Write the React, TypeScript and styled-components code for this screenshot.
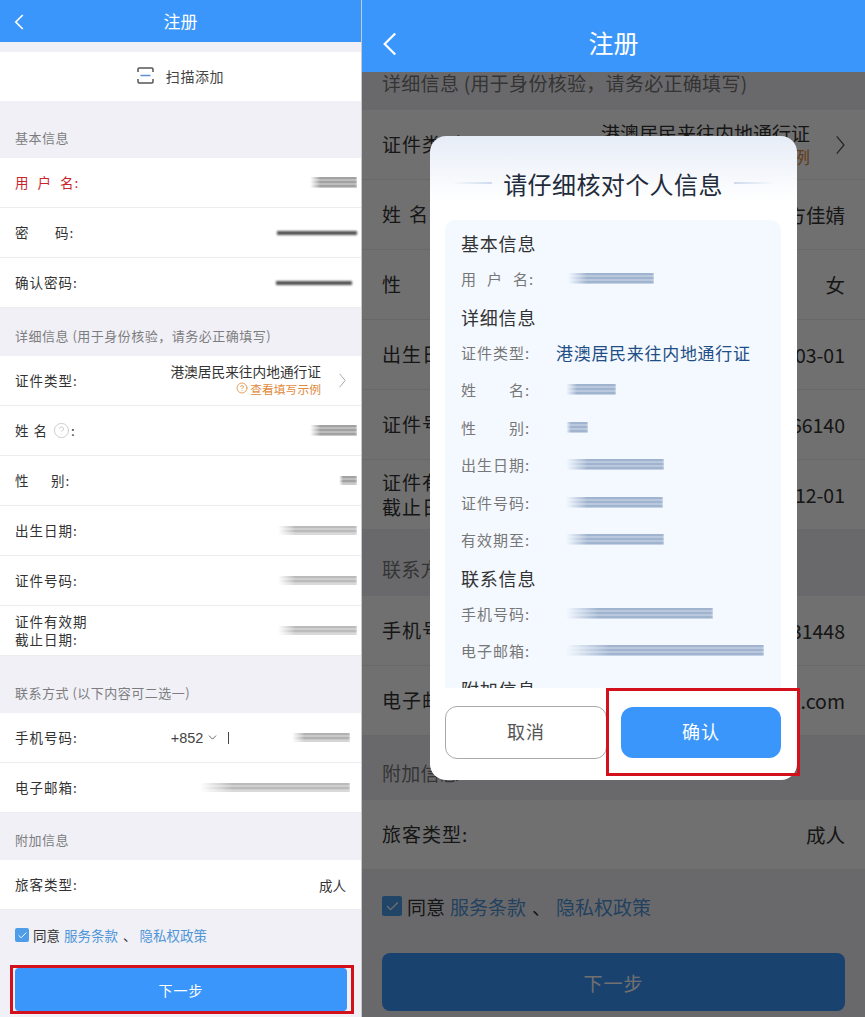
import React from "react";
import styled, { createGlobalStyle } from "styled-components";
import { Check, ChevronDown, CircleHelp } from "lucide-react";

const BLUE = "#3b96fb";
const FONT = `"Noto Sans CJK SC", "Noto Sans", sans-serif`;
const DETAIL_TITLE = "详细信息 (用于身份核验\uFF0C请务必正确填写)";

type Big = { $big?: boolean };
const size = (small: number, big: number) => ({ $big }: Big) => `${$big ? big : small}px`;

const GlobalStyle = createGlobalStyle`
  html, body {
    margin: 0;
    padding: 0;
    background: #fff;
  }
  * {
    box-sizing: border-box;
  }
`;

const Page = styled.div`
  display: flex;
  width: 865px;
  height: 1017px;
  overflow: hidden;
  font-family: ${FONT};
  color: #333;
`;

const Panel = styled.div<Big>`
  position: relative;
  flex: 0 0 ${({ $big }) => ($big ? "503px" : "362px")};
  height: 1017px;
  overflow: hidden;
  background: #f0f0f6;
  border-right: ${({ $big }) => ($big ? "none" : "1px solid #c9c9cd")};
`;

const Header = styled.div<Big>`
  position: relative;
  display: flex;
  align-items: center;
  justify-content: center;
  height: ${size(42, 72)};
  padding-top: ${size(0, 12)};
  padding-bottom: ${size(2, 0)};
  background: ${BLUE};
  color: #fff;
  font-size: ${size(17, 25)};
  svg {
    position: absolute;
    left: ${size(14, 20)};
    top: ${size(14, 32)};
  }
`;

const ScanRow = styled.div`
  display: flex;
  align-items: center;
  justify-content: center;
  gap: 12px;
  height: 49px;
  margin-top: 10px;
  padding-bottom: 2px;
  background: #fff;
  font-size: 14px;
  letter-spacing: 0.6px;
  color: #444;
`;

const Section = styled.div<Big & { $h: number }>`
  display: flex;
  align-items: flex-end;
  height: ${({ $h }) => $h}px;
  padding: 0 ${size(15, 20)} ${size(12, 17)};
  font-size: ${size(13, 19)};
  line-height: ${size(16, 20)};
  letter-spacing: ${size(0.5, 0.3)};
  color: ${({ $big }) => ($big ? "#777" : "#7d7d80")};
  white-space: nowrap;
`;

const Row = styled.div<Big>`
  display: flex;
  align-items: center;
  justify-content: space-between;
  height: ${size(50, 70)};
  padding: 0 ${size(15, 20)};
  background: #fff;
  border-bottom: 1px solid #ececf0;
`;

const Label = styled.span<Big & { $spread?: number; $red?: boolean }>`
  flex: none;
  font-size: ${size(13.5, 19)};
  line-height: 1.27;
  letter-spacing: ${({ $spread }) => $spread ?? 1}px;
  color: ${({ $red }) => ($red ? "#c8242c" : "#333")};
  white-space: pre;
`;

// last glyph and colon of a spread-out label sit close together
const Tight = styled.span`
  letter-spacing: 1px;
`;

const LabelGroup = styled.span`
  display: flex;
  align-items: center;
  gap: 1px;
  svg {
    color: #c4c4c6;
  }
`;

const Value = styled.span<Big>`
  font-size: ${size(13.5, 19.5)};
  color: #333;
  white-space: nowrap;
`;

const TypeValue = styled.div<Big>`
  display: flex;
  align-items: center;
  gap: ${size(18, 26)};
  svg {
    flex: none;
  }
`;

const TypeText = styled.div<Big>`
  display: flex;
  flex-direction: column;
  align-items: flex-end;
  margin-top: ${size(-2, 0)};
  line-height: 1.3;
  font-size: ${size(13.7, 19)};
  white-space: nowrap;
`;

const SampleLink = styled.span<Big>`
  display: flex;
  align-items: center;
  gap: 2px;
  font-size: ${size(11.8, 17)};
  color: #e08a3c;
`;

// blurred-out personal data
const Smudge = styled.span<{ $w: number; $h?: number; $solid?: boolean; $tone?: string; $ml?: number; $mr?: number }>`
  display: block;
  flex: none;
  width: ${({ $w }) => $w}px;
  height: ${({ $h }) => $h ?? 11}px;
  margin-left: ${({ $ml }) => ($ml !== undefined ? `${$ml}px` : "auto")};
  margin-right: ${({ $mr }) => $mr ?? 0}px;
  filter: blur(0.9px);
  opacity: 0.85;
  mask-image: ${({ $solid }) => ($solid ? "none" : "linear-gradient(to right, transparent, #000 22%)")};
  background: ${({ $solid, $tone = "#444" }) =>
    $solid ? $tone : `repeating-linear-gradient(to bottom, ${$tone} 0 2px, transparent 2px 4px)`};
`;

const PhonePrefix = styled.span`
  display: flex;
  align-items: center;
  gap: 3px;
  margin-left: 93px;
  font-family: "Liberation Sans", sans-serif;
  font-size: 14.5px;
  color: #444;
`;

const Caret = styled.span`
  margin-left: 6px;
  width: 1px;
  height: 12px;
  background: #444;
`;

const Agree = styled.div<Big>`
  display: flex;
  align-items: center;
  gap: ${size(4, 5)};
  height: ${size(50, 72)};
  padding-left: ${size(15, 20)};
  font-size: ${size(13.5, 19)};
  white-space: nowrap;
`;

const Tick = styled.span<Big>`
  display: flex;
  align-items: center;
  justify-content: center;
  width: ${size(14, 20)};
  height: ${size(14, 20)};
  border-radius: 2px;
  background: #4d9de8;
  color: #fff;
`;

const Terms = styled.a`
  color: #4f95d8;
`;

const Dun = styled.span<Big>`
  margin: 0 ${size(3, 5)} 0 ${size(5, 6)};
`;

const NextButton = styled.div<Big>`
  display: flex;
  align-items: center;
  justify-content: center;
  width: ${size(332, 463)};
  height: ${size(43, 58)};
  margin: ${size(8, 11)} 0 0 ${size(15, 20)};
  border-radius: ${size(4, 8)};
  background: ${BLUE};
  color: #fff;
  font-size: ${size(14, 19)};
  letter-spacing: 1px;
`;

const Dim = styled.div`
  position: absolute;
  inset: 72px 0 0 0;
  background: rgba(0, 0, 0, 0.56);
`;

const Modal = styled.div`
  position: absolute;
  left: 68px;
  top: 136px;
  display: flex;
  flex-direction: column;
  width: 367px;
  height: 644px;
  padding: 0 16px 0 15px;
  border-radius: 16px;
  background: linear-gradient(to bottom, #e6ecf7 0, #ffffff 64px);
`;

const ModalTitle = styled.div`
  flex: 0 0 84px;
  display: flex;
  align-items: center;
  justify-content: center;
  gap: 11px;
  padding: 26px 0 16px;
  font-size: 24px;
  letter-spacing: 0.4px;
  color: #222b3a;
  white-space: nowrap;
`;

const TitleRule = styled.span<{ $flip?: boolean }>`
  width: 40px;
  height: 2px;
  background: linear-gradient(
    ${({ $flip }) => ($flip ? "to left" : "to right")},
    rgba(190, 208, 232, 0),
    #cddbef
  );
`;

const InfoCard = styled.div`
  flex: 0 0 468px;
  overflow: hidden;
  padding: 11px 16px 0;
  border-radius: 10px 10px 0 0;
  background: #f4f9ff;
`;

const InfoHeading = styled.div`
  height: 25px;
  line-height: 25px;
  font-size: 18px;
  letter-spacing: 0.8px;
  color: #333;
  margin-bottom: 4px;
`;

const InfoRow = styled.div<{ $last?: boolean }>`
  display: flex;
  align-items: center;
  height: 37.5px;
  margin-bottom: ${({ $last }) => ($last ? "7px" : "0")};
`;

const InfoLabel = styled.span<{ $spread?: number }>`
  flex: 0 0 95px;
  font-size: 15px;
  letter-spacing: ${({ $spread }) => $spread ?? 1}px;
  color: #777;
  white-space: pre;
`;

const InfoValue = styled.span`
  font-size: 17px;
  letter-spacing: 0.7px;
  color: #1f4f86;
  white-space: nowrap;
`;

const ModalFooter = styled.div`
  flex: 1;
  display: flex;
  gap: 14px;
  padding-top: 18px;
`;

const ModalButton = styled.div<{ $primary?: boolean }>`
  display: flex;
  align-items: center;
  justify-content: center;
  width: ${({ $primary }) => ($primary ? "160px" : "162px")};
  height: ${({ $primary }) => ($primary ? "51px" : "53px")};
  margin-top: ${({ $primary }) => ($primary ? "1px" : "0")};
  padding-bottom: 3px;
  border-radius: 12px;
  border: ${({ $primary }) => ($primary ? "none" : "1px solid #a9a9a9")};
  background: ${({ $primary }) => ($primary ? BLUE : "#fff")};
  color: ${({ $primary }) => ($primary ? "#fff" : "#555")};
  font-size: 18px;
  letter-spacing: 1px;
`;

// red annotation boxes drawn over the screenshots
const Highlight = styled.div<{ $x: number; $y: number; $w: number; $h: number }>`
  position: absolute;
  left: ${({ $x }) => $x}px;
  top: ${({ $y }) => $y}px;
  width: ${({ $w }) => $w}px;
  height: ${({ $h }) => $h}px;
  border: 3px solid #d3111c;
  pointer-events: none;
`;

const BackIcon = ({ big }: { big?: boolean }) => (
  <svg width={big ? 15 : 10} height={big ? 24 : 16} viewBox="0 0 10 16" fill="none">
    <path d="M8.8 1 L1.8 8 L8.8 15" stroke="#fff" strokeWidth={big ? 1.5 : 1.7} />
  </svg>
);

const ScanIcon = () => (
  <svg width="17" height="17" viewBox="0 0 17 17" fill="none">
    <path d="M1 5V2.2C1 1.5 1.5 1 2.2 1H14.8C15.5 1 16 1.5 16 2.2V5" stroke="#555" strokeWidth="1.5" />
    <path d="M1 12V14.8C1 15.5 1.5 16 2.2 16H14.8C15.5 16 16 15.5 16 14.8V12" stroke="#555" strokeWidth="1.5" />
    <path d="M3.5 8.5H13.5" stroke="#5f8fd0" strokeWidth="1.5" />
  </svg>
);

const RightChevron = ({ big }: { big?: boolean }) => (
  <svg width={big ? 9 : 7} height={big ? 22 : 15} viewBox="0 0 7 15" fill="none">
    <path d="M0.6 0.8 L6.2 7.5 L0.6 14.2" stroke={big ? "#555" : "#aaa"} strokeWidth="1" />
  </svg>
);

const TypeField = ({ big }: { big?: boolean }) => (
  <Row $big={big}>
    <Label $big={big}>证件类型:</Label>
    <TypeValue $big={big}>
      <TypeText $big={big}>
        <span>港澳居民来往内地通行证</span>
        <SampleLink $big={big}>
          <CircleHelp size={big ? 17 : 12} strokeWidth={1.6} />
          查看填写示例
        </SampleLink>
      </TypeText>
      <RightChevron big={big} />
    </TypeValue>
  </Row>
);

const AgreeLine = ({ big }: { big?: boolean }) => (
  <Agree $big={big}>
    <Tick $big={big}>
      <Check size={big ? 15 : 11} strokeWidth={2} />
    </Tick>
    <span>同意</span>
    <span>
      <Terms>服务条款</Terms>
      <Dun $big={big}>、</Dun>
      <Terms>隐私权政策</Terms>
    </span>
  </Agree>
);

const RegisterForm = () => (
  <Panel>
    <Header>
      <BackIcon />
      注册
    </Header>
    <ScanRow>
      <ScanIcon />
      扫描添加
    </ScanRow>

    <Section $h={57}>基本信息</Section>
    <Row>
      <Label $red $spread={9}>
        用户<Tight>名:</Tight>
      </Label>
      <Smudge $w={47} $mr={-11} />
    </Row>
    <Row>
      <Label $spread={6.5}>
        密　<Tight>码:</Tight>
      </Label>
      <Smudge $w={80} $h={4} $solid $tone="#333" $mr={-11} />
    </Row>
    <Row>
      <Label>确认密码:</Label>
      <Smudge $w={76} $h={4} $solid $tone="#333" $mr={-6} />
    </Row>

    <Section $h={48}>{DETAIL_TITLE}</Section>
    <TypeField />
    <Row>
      <LabelGroup>
        <Label $spread={5}>姓名</Label>
        <CircleHelp size={17} strokeWidth={1.2} />
        <Label>:</Label>
      </LabelGroup>
      <Smudge $w={47} $mr={-11} />
    </Row>
    <Row>
      <Label $spread={4.5}>
        性　<Tight>别:</Tight>
      </Label>
      <Smudge $w={18} $h={9} $mr={-11} />
    </Row>
    <Row>
      <Label>出生日期:</Label>
      <Smudge $w={79} $h={9} $tone="#777" $mr={-11} />
    </Row>
    <Row>
      <Label>证件号码:</Label>
      <Smudge $w={79} $h={9} $tone="#777" $mr={-11} />
    </Row>
    <Row>
      <Label>
        证件有效期{"\n"}截止日期:
      </Label>
      <Smudge $w={79} $h={9} $tone="#777" $mr={-11} />
    </Row>

    <Section $h={57}>联系方式 (以下内容可二选一)</Section>
    <Row>
      <Label>手机号码:</Label>
      <PhonePrefix>
        +852
        <ChevronDown size={13} strokeWidth={1.5} />
        <Caret />
      </PhonePrefix>
      <Smudge $w={58} $h={9} $tone="#666" $mr={-4} />
    </Row>
    <Row>
      <Label>电子邮箱:</Label>
      <Smudge $w={150} $h={9} $tone="#777" $mr={-4} />
    </Row>

    <Section $h={47}>附加信息</Section>
    <Row>
      <Label>旅客类型:</Label>
      <Value>成人</Value>
    </Row>

    <AgreeLine />
    <NextButton>下一步</NextButton>
    <Highlight $x={10} $y={965} $w={344} $h={49} />
  </Panel>
);

const ConfirmDialog = () => (
  <Modal>
    <ModalTitle>
      <TitleRule />
      请仔细核对个人信息
      <TitleRule $flip />
    </ModalTitle>
    <InfoCard>
      <InfoHeading>基本信息</InfoHeading>
      <InfoRow $last>
        <InfoLabel $spread={11}>
          用户<Tight>名:</Tight>
        </InfoLabel>
        <Smudge $w={86} $tone="#4e6f9f" $ml={12} />
      </InfoRow>
      <InfoHeading>详细信息</InfoHeading>
      <InfoRow>
        <InfoLabel>证件类型:</InfoLabel>
        <InfoValue>港澳居民来往内地通行证</InfoValue>
      </InfoRow>
      <InfoRow>
        <InfoLabel $spread={9}>
          姓　<Tight>名:</Tight>
        </InfoLabel>
        <Smudge $w={50} $tone="#4e6f9f" $ml={10} />
      </InfoRow>
      <InfoRow>
        <InfoLabel $spread={9}>
          性　<Tight>别:</Tight>
        </InfoLabel>
        <Smudge $w={22} $tone="#4e6f9f" $ml={10} />
      </InfoRow>
      <InfoRow>
        <InfoLabel>出生日期:</InfoLabel>
        <Smudge $w={98} $tone="#4e6f9f" $ml={10} />
      </InfoRow>
      <InfoRow>
        <InfoLabel>证件号码:</InfoLabel>
        <Smudge $w={97} $tone="#4e6f9f" $ml={10} />
      </InfoRow>
      <InfoRow $last>
        <InfoLabel>有效期至:</InfoLabel>
        <Smudge $w={98} $tone="#4e6f9f" $ml={10} />
      </InfoRow>
      <InfoHeading>联系信息</InfoHeading>
      <InfoRow>
        <InfoLabel>手机号码:</InfoLabel>
        <Smudge $w={147} $tone="#4e6f9f" $ml={10} />
      </InfoRow>
      <InfoRow $last>
        <InfoLabel>电子邮箱:</InfoLabel>
        <Smudge $w={198} $tone="#4e6f9f" $ml={10} />
      </InfoRow>
      <InfoHeading>附加信息</InfoHeading>
    </InfoCard>
    <ModalFooter>
      <ModalButton>取消</ModalButton>
      <ModalButton $primary>确认</ModalButton>
    </ModalFooter>
  </Modal>
);

const ReviewScreen = () => (
  <Panel $big>
    <Header $big>
      <BackIcon big />
      注册
    </Header>

    <Section $big $h={38}>{DETAIL_TITLE}</Section>
    <TypeField big />
    <Row $big>
      <Label $big $spread={8}>姓名:</Label>
      <Value $big>方佳婧</Value>
    </Row>
    <Row $big>
      <Label $big $spread={6}>性　别:</Label>
      <Value $big>女</Value>
    </Row>
    <Row $big>
      <Label $big>出生日期:</Label>
      <Value $big>03-01</Value>
    </Row>
    <Row $big>
      <Label $big>证件号码:</Label>
      <Value $big>66140</Value>
    </Row>
    <Row $big>
      <Label $big>
        证件有效期{"\n"}截止日期:
      </Label>
      <Value $big>12-01</Value>
    </Row>

    <Section $big $h={66}>联系方式 (以下内容可二选一)</Section>
    <Row $big>
      <Label $big>手机号码:</Label>
      <Value $big>31448</Value>
    </Row>
    <Row $big>
      <Label $big>电子邮箱:</Label>
      <Value $big>.com</Value>
    </Row>

    <Section $big $h={64}>附加信息</Section>
    <Row $big>
      <Label $big>旅客类型:</Label>
      <Value $big>成人</Value>
    </Row>

    <AgreeLine big />
    <NextButton $big>下一步</NextButton>

    <Dim />
    <ConfirmDialog />
    <Highlight $x={244} $y={688} $w={194} $h={88} />
  </Panel>
);

export default function App() {
  return (
    <Page>
      <GlobalStyle />
      <RegisterForm />
      <ReviewScreen />
    </Page>
  );
}
